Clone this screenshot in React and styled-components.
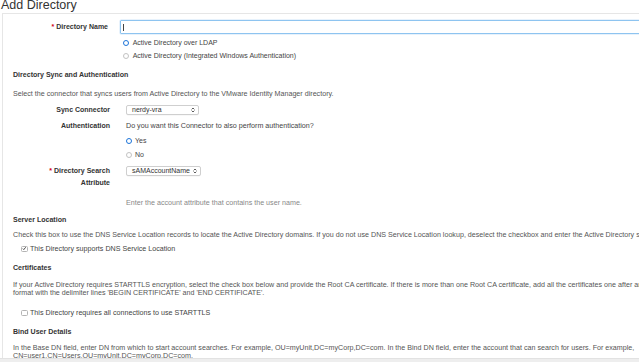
import React from 'react';
import styled, { createGlobalStyle } from 'styled-components';

const GlobalStyle = createGlobalStyle`
  html, body {
    margin: 0;
    padding: 0;
    background: #fff;
  }
  body {
    font-family: 'Liberation Sans', Arial, Helvetica, sans-serif;
  }
`;

const Page = styled.div`
  position: relative;
  width: 639px;
  height: 362px;
  overflow: hidden;
  background: #fff;
  color: #333;
  font-size: 7.15px;
`;

const Title = styled.h1`
  margin: -1px 0 0 1px;
  font-size: 12.5px;
  line-height: 12px;
  font-weight: normal;
  color: #333;
`;

const Panel = styled.div`
  width: 1100px;
  margin: 2px 0 0 2px;
  border-top: 1px solid #e6e6e6;
  border-left: 1px solid #e6e6e6;
  padding: 5.5px 0 0 10px;
  box-sizing: border-box;
  min-height: 400px;
`;

const FieldRow = styled.div`
  display: grid;
  grid-template-columns: ${props => props.labelWidth}px 1fr;
  column-gap: ${props => props.gap}px;
  align-items: ${props => props.align || 'center'};
  margin-top: ${props => props.mt || 0}px;
`;

const Label = styled.div`
  text-align: right;
  font-size: 7px;
  font-weight: bold;
  line-height: ${props => props.lh || 8}px;
  color: #333;
`;

const Required = styled.span`
  color: #d0021b;
  margin-right: 2px;
`;

const TextField = styled.div`
  position: relative;
  height: 14px;
  width: 700px;
  border: 1px solid #8ec4f0;
  box-sizing: border-box;
  border-radius: 1px;
  box-shadow: 0 0 0 0.5px #cfe6fa;
`;

const Input = styled.input`
  width: 100%;
  height: 100%;
  border: 0;
  padding: 0 3px;
  margin: 0;
  box-sizing: border-box;
  background: transparent;
  font: inherit;
  outline: none;
`;

const Caret = styled.span`
  position: absolute;
  left: 2px;
  top: 3px;
  width: 0.8px;
  height: 7px;
  background: #444;
`;

const ChoiceList = styled.div`
  display: flex;
  flex-direction: column;
  margin-top: ${props => props.mt || 0}px;
  padding-left: ${props => props.indent || 0}px;
`;

const Choice = styled.label`
  display: flex;
  align-items: center;
  gap: ${props => props.gap || 3}px;
  height: ${props => props.h}px;
  font-size: ${props => props.fs || 7}px;
  color: #444;
`;

const RadioDot = styled.span`
  flex: none;
  width: 6px;
  height: 6px;
  border-radius: 50%;
  box-sizing: border-box;
  background: #fff;
  border: ${props =>
    props.checked ? '1.9px solid #1c74d9' : '0.8px solid #c2c2c2'};
`;

const CheckBox = styled.span`
  flex: none;
  display: flex;
  align-items: center;
  justify-content: center;
  width: 6.5px;
  height: 6.5px;
  box-sizing: border-box;
  border: 0.8px solid #b4b4b4;
  border-radius: 1.5px;
  background: #fff;
`;

const SectionTitle = styled.div`
  font-weight: bold;
  font-size: 7.05px;
  line-height: 8px;
  color: #333;
  margin-top: ${props => props.mt || 0}px;
`;

const Description = styled.div`
  line-height: 8px;
  color: #555;
  white-space: nowrap;
  margin-top: ${props => props.mt || 0}px;
`;

const Hint = styled.div`
  line-height: 8px;
  color: #888;
  margin-top: ${props => props.mt || 0}px;
  padding-left: 113px;
`;

const Question = styled.div`
  line-height: 8px;
  color: #444;
`;

const Select = styled.div`
  display: flex;
  align-items: center;
  justify-content: space-between;
  width: ${props => props.w}px;
  height: 10px;
  box-sizing: border-box;
  padding: 0 3px 0 5px;
  border: 0.8px solid #cfcfcf;
  border-radius: 2px;
  background: #fff;
  color: #333;
  font-size: 7px;
  box-shadow: 0 0.5px 0.5px rgba(0, 0, 0, 0.06);
`;

const Footer = styled.div`
  position: absolute;
  left: 0;
  right: 0;
  bottom: 0;
  height: 3px;
  background: #eeeeee;
  border-top: 0.5px solid #e2e2e2;
`;

const Arrows = () => (
  <svg width="4" height="6" viewBox="0 0 4 6">
    <path d="M0.6 2.4 L2 1 L3.4 2.4" fill="none" stroke="#333" strokeWidth="0.8" />
    <path d="M0.6 3.6 L2 5 L3.4 3.6" fill="none" stroke="#333" strokeWidth="0.8" />
  </svg>
);

const Check = () => (
  <svg width="5" height="5" viewBox="0 0 5 5">
    <path d="M0.9 2.6 L2 3.7 L4.1 1.1" fill="none" stroke="#222" strokeWidth="0.9" />
  </svg>
);

const Radio = ({ checked, h, gap, children }) => (
  <Choice h={h} gap={gap}>
    <RadioDot checked={checked} />
    {children}
  </Choice>
);

const Checkbox = ({ checked, children }) => (
  <Choice h={10} gap={2.5} fs={7.15}>
    <CheckBox>{checked && <Check />}</CheckBox>
    {children}
  </Choice>
);

export default function App() {
  return (
    <>
      <GlobalStyle />
      <Page>
        <Title>Add Directory</Title>
        <Panel>
          <FieldRow labelWidth={95} gap={12}>
            <Label>
              <Required>*</Required>Directory Name
            </Label>
            <TextField>
              <Input type="text" aria-label="Directory Name" />
              <Caret />
            </TextField>
          </FieldRow>

          <ChoiceList mt={2.5} indent={110}>
            <Radio checked h={13.3} gap={3.7}>Active Directory over LDAP</Radio>
            <Radio h={13.3} gap={3.7}>Active Directory (Integrated Windows Authentication)</Radio>
          </ChoiceList>

          <SectionTitle mt={8.4}>Directory Sync and Authentication</SectionTitle>
          <Description mt={11}>
            Select the connector that syncs users from Active Directory to the VMware Identity Manager directory.
          </Description>

          <FieldRow labelWidth={97} gap={16} mt={7}>
            <Label>Sync Connector</Label>
            <Select w={73}>
              <span>nerdy-vra</span>
              <Arrows />
            </Select>
          </FieldRow>

          <FieldRow labelWidth={97} gap={16} mt={7.5}>
            <Label>Authentication</Label>
            <Question>Do you want this Connector to also perform authentication?</Question>
          </FieldRow>

          <ChoiceList mt={3.5} indent={113}>
            <Radio checked h={14}>Yes</Radio>
            <Radio h={14}>No</Radio>
          </ChoiceList>

          <FieldRow labelWidth={97} gap={16} mt={2.7} align="start">
            <Label lh={12}>
              <Required>*</Required>Directory Search
              <br />
              Attribute
            </Label>
            <Select w={75} style={{ marginTop: 1.3 }}>
              <span>sAMAccountName</span>
              <Arrows />
            </Select>
          </FieldRow>

          <Hint mt={10.3}>Enter the account attribute that contains the user name.</Hint>

          <SectionTitle mt={9.5}>Server Location</SectionTitle>
          <Description mt={6.5}>
            Check this box to use the DNS Service Location records to locate the Active Directory domains. If you do not use DNS Service Location lookup, deselect the checkbox and enter the Active Directory server host name and port number.
          </Description>
          <ChoiceList mt={5} indent={8}>
            <Checkbox checked>This Directory supports DNS Service Location</Checkbox>
          </ChoiceList>

          <SectionTitle mt={10}>Certificates</SectionTitle>
          <Description mt={9}>
            If your Active Directory requires STARTTLS encryption, select the check box below and provide the Root CA certificate. If there is more than one Root CA certificate, add all the certificates one after another in PEM
            <br />
            format with the delimiter lines 'BEGIN CERTIFICATE' and 'END CERTIFICATE'.
          </Description>
          <ChoiceList mt={11} indent={8}>
            <Checkbox>This Directory requires all connections to use STARTTLS</Checkbox>
          </ChoiceList>

          <SectionTitle mt={10.5}>Bind User Details</SectionTitle>
          <Description mt={8}>
            In the Base DN field, enter DN from which to start account searches. For example, OU=myUnit,DC=myCorp,DC=com. In the Bind DN field, enter the account that can search for users. For example,
            <br />
            CN=user1,CN=Users,OU=myUnit,DC=myCorp,DC=com.
          </Description>
        </Panel>
        <Footer />
      </Page>
    </>
  );
}
